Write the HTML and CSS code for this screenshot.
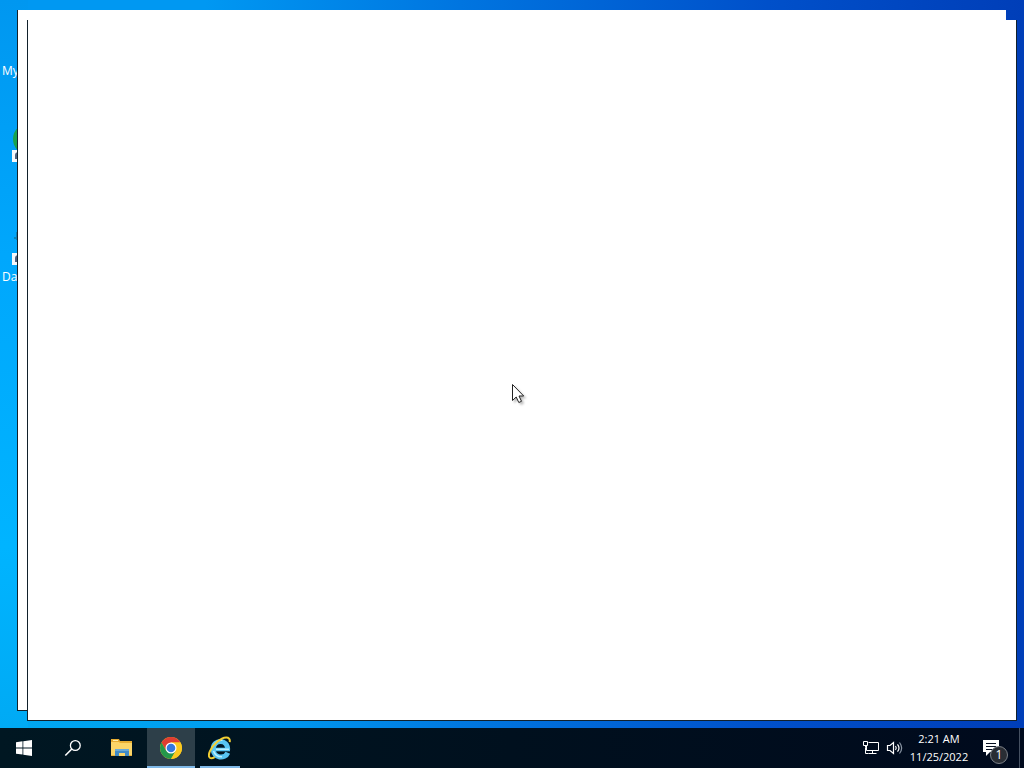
FILE: index.html
```html
<!DOCTYPE html>
<html lang="en">
<head>
<meta charset="utf-8">
<title>Desktop</title>
<link rel="stylesheet" href="styles.css">
</head>
<body class="desktop">
<main class="workspace">
  <div class="shortcut shortcut-documents"><span class="shortcut-label">My</span></div>
  <div class="shortcut shortcut-browser">
    <svg class="shortcut-icon" width="32" height="36" viewBox="0 0 32 36" aria-hidden="true"><circle cx="17" cy="12" r="16" fill="#18a34f"/><path fill="#f5f8fb" d="M0 23h12v12H0z"/><path d="M4 32v-4q0-2 3-2h3" fill="none" stroke="#4d6180" stroke-width="2"/></svg>
  </div>
  <div class="shortcut shortcut-data">
    <svg class="shortcut-icon" width="32" height="36" viewBox="0 0 32 36" aria-hidden="true"><path fill="#0d82b4" d="M2 7h2v2H2zM4 2h2v8H4z"/><path fill="#f5f8fb" d="M0 23h12v12H0z"/><path d="M4 32v-4q0-2 3-2h3" fill="none" stroke="#4d6180" stroke-width="2"/></svg>
    <span class="shortcut-label">Da</span>
  </div>
  <section class="window window-back" aria-label="Background window"></section>
  <section class="window window-front" aria-label="Active window"></section>
  <svg class="pointer" width="18" height="24" viewBox="0 0 18 24" aria-hidden="true"><path d="M1.500 1.500v16l3.700-3.500 2.600 5.500 2.700-1.200-2.500-5.300h4.700z" fill="#fff" stroke="#222" stroke-linejoin="miter"/></svg>
</main>
<footer class="taskbar">
  <nav class="apps" aria-label="Taskbar">
    <button class="task" aria-label="Start"><svg width="16" height="16" viewBox="0 0 16 16"><path fill="#fff" d="M0 2.200l6.500-.9v6.200H0zM7.300 1.200L16 0v7.500H7.300zM0 8.400h6.500v6.200L0 13.700zM7.300 8.400H16V16l-8.700-1.200z"/></svg></button>
    <button class="task" aria-label="Search"><svg width="18" height="18" viewBox="0 0 18 18"><circle cx="11.300" cy="6.500" r="4.900" fill="none" stroke="#fff" stroke-width="1.300"/><path d="M7.800 10L1.300 16.500" stroke="#fff" stroke-width="1.600"/></svg></button>
    <button class="task" aria-label="File Explorer"><svg width="24" height="20" viewBox="0 0 24 20"><path fill="#e7ad32" d="M1 1h8l1 2h12v4H1z"/><path fill="#fff0ae" d="M3 2h5v1H3z"/><path fill="#fbd568" d="M1 4h8l1 1h12v13H1z"/><path fill="#e9b13b" d="M1 17h4v1H1zM19 17h3v1h-3z"/><path fill="#418bc6" d="M5 11h14v7h-4v-3H9v3H5z"/><path fill="#69a9d7" d="M5 11h14v2H5z"/></svg></button>
    <button class="task task-active" aria-label="Google Chrome"><svg width="24" height="24" viewBox="0 0 24 24"><circle cx="12" cy="12" r="11" fill="#fbc91f"/><path fill="#df3d32" d="M2.500 6.500A11 11 0 0 1 21.500 6.500H12L7.200 14.700z"/><path fill="#24974a" d="M2.500 6.500A11 11 0 0 0 12 23l4.800-8.300H7.200z"/><path fill="#fbc91f" d="M21.500 6.500A11 11 0 0 1 12 23l4.800-8.300L12 6.500z"/><circle cx="12" cy="12" r="5.500" fill="#fff"/><circle cx="12" cy="12" r="4.300" fill="#3478df"/></svg></button>
    <button class="task task-open" aria-label="Internet Explorer"><svg width="24" height="24" viewBox="0 0 24 24"><path d="M7 13.500h15" stroke="#58c4f2" stroke-width="3.600"/><path d="M19.700 13.500C19.700 2.600 5.200 3 5.200 13c0 9.700 12 10.200 14.600 3.800" fill="none" stroke="#58c4f2" stroke-width="5"/><path d="M6 9Q9 3.500 14.500 4.300M5.500 15q2 6 8.500 5.800M8 13.300h13" fill="none" stroke="#b8efff" stroke-width="1.600"/><path d="M21.700 6.200C22.800-.3 15.500.5 9 6 2 12-.7 19.700 1.900 21.700c1.100.8 3 .4 4.800-.6" fill="none" stroke="#f2ce32" stroke-width="2"/></svg></button>
  </nav>
  <div class="tray">
    <button class="tray-button" aria-label="Network"><svg width="18" height="16" viewBox="0 0 18 16" fill="none" stroke="#fff"><path d="M6.500 2.500h10v8h-12v-5M10.500 10.500v3M6.500 13.500h8M1.500 1.500h4v4h-4zM3.500 5.500v2M3.500 7.500v6h3"/></svg></button>
    <button class="tray-button" aria-label="Volume"><svg width="18" height="16" viewBox="0 0 18 16" fill="none" stroke="#fff" stroke-width="1.200"><path d="M1.500 5.500H4l3.500-3v11l-3.500-3H1.500z"/><path d="M9.500 6q1.500 2 0 4M11.500 4.300q3 3.700 0 7.400"/><path stroke="#8995a3" d="M13.500 2.500q4.300 5.500 0 11"/></svg></button>
    <button class="clock"><time datetime="2022-11-25T02:21"><span>2:21 AM</span><span>11/25/2022</span></time></button>
    <button class="notifications" aria-label="1 notification"><svg width="16" height="16" viewBox="0 0 16 16"><path fill="#fff" d="M0 0h16v12H7l-4 4v-4H0z"/><path d="M3 3.500h10M3 6.500h10M3 9.500h7" stroke="#071021"/></svg><span class="badge">1</span></button>
    <button class="show-desktop" aria-label="Show desktop"></button>
  </div>
</footer>
</body>
</html>
```
FILE: styles.css
```css
* {
  box-sizing: border-box;
}

.desktop {
  margin: 0;
  min-height: 100vh;
  display: flex;
  flex-direction: column;
  overflow: hidden;
  font-family: "Open Sans", "Noto Sans", sans-serif;
  font-size: 11px;
  color: #fff;
}

.workspace {
  flex: 1;
  position: relative;
  background:
    linear-gradient(180deg, #0097f0 0%, #00a7fc 35%, #00b4ff 75%, #00aaf4 100%) left / 28px 100% no-repeat,
    linear-gradient(90deg, #00a8f2 0%, #009cf0 25%, #0078e0 45%, #0050ca 75%, #003eb8 100%) bottom / 100% 8px no-repeat,
    linear-gradient(90deg, #0098f2 0%, #0098f2 20%, #0075e0 45%, #0050ca 75%, #003eb8 100%);
}

.shortcut {
  position: absolute;
  left: 2px;
}

.shortcut-documents {
  top: 63px;
}

.shortcut-browser {
  top: 127px;
}

.shortcut-data {
  top: 230px;
}

.shortcut-label,
.shortcut-icon {
  display: block;
}

.shortcut-label {
  line-height: 16px;
  font-size: 12px;
}

.shortcut-icon {
  margin-left: 10px;
}

.shortcut-data .shortcut-label {
  margin-top: 3px;
}

.window {
  position: absolute;
  background: #fff;
  border: 1px solid #12212b;
  border-top: 0;
}

.window-back {
  inset: 10px 18px 17px 17px;
  border-right: 0;
}

.window-front {
  inset: 20px 7px 7px 27px;
}

.pointer {
  position: absolute;
  left: 50%;
  top: 383px;
  margin-left: -1px;
  filter: drop-shadow(2px 2px 1px #0004);
}

.taskbar {
  height: 40px;
  display: flex;
  justify-content: space-between;
  background: linear-gradient(90deg, #001722, #00101e 50%, #000a1d);
}

.apps,
.tray {
  display: flex;
}

.apps {
  gap: 1px;
}

button {
  padding: 0;
  border: 0;
  background: none;
  color: inherit;
  font: inherit;
  display: flex;
  align-items: center;
  justify-content: center;
}

.task {
  width: 48px;
  position: relative;
}

.task-active {
  background: #2d3f49;
}

.task-active::after,
.task-open::after {
  content: "";
  position: absolute;
  inset: auto 0 0;
  height: 2px;
  background: #7fb9e8;
}

.task-open::after {
  inset: auto 4px 0;
}

.tray-button {
  width: 24px;
}

.clock {
  width: 64px;
  line-height: 18px;
}

.clock span {
  display: block;
}

.notifications {
  width: 48px;
  position: relative;
  justify-content: flex-start;
  padding-left: 12px;
}

.badge {
  position: absolute;
  left: 19px;
  top: 18px;
  width: 18px;
  height: 18px;
  border: 1px solid #7b8087;
  border-radius: 50%;
  background: #292d34;
  font-size: 12px;
  line-height: 16px;
  text-align: center;
}

.show-desktop {
  width: 5px;
  border-left: 1px solid #455061;
}
```
